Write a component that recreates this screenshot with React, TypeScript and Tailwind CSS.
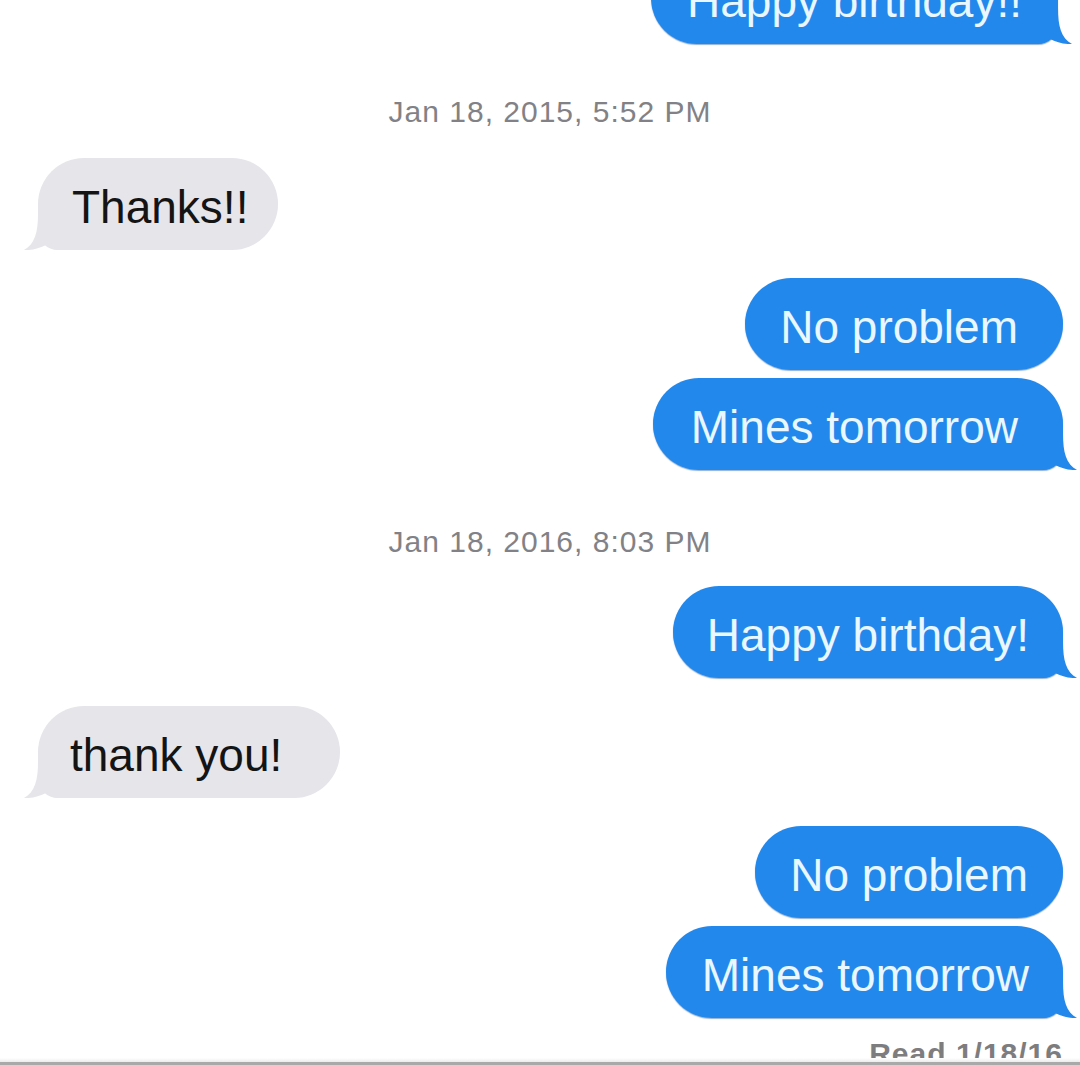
type Side = 'left' | 'right';

const BLUE = '#2388ec';
const GRAY = '#e5e5ea';

function Tail({ side }: { side: Side }) {
  return (
    <svg
      width="34"
      height="36"
      viewBox="0 0 34 36"
      className={
        side === 'right'
          ? 'absolute -right-[14px] bottom-0'
          : 'absolute -left-[14px] bottom-0 -scale-x-100'
      }
    >
      <path
        d="M0 0H20C20 18 23 30 34 36C26 36.5 18 34 12 31C9 33.5 5 35.5 0 36Z"
        fill={side === 'right' ? BLUE : GRAY}
      />
    </svg>
  );
}

interface BubbleProps {
  text: string;
  side: Side;
  tail?: boolean;
  className?: string;
  pad: string;
}

function Bubble({ text, side, tail, className = '', pad }: BubbleProps) {
  const color =
    side === 'right'
      ? 'bg-[#2388ec] text-[#e9f7ff] shadow-[0_1px_1px_rgba(15,80,160,0.45)]'
      : 'bg-[#e5e5ea] text-[#141414]';
  const corner = tail ? (side === 'right' ? 'rounded-br-[20px]' : 'rounded-bl-[20px]') : '';
  return (
    <div
      className={`flex ${side === 'right' ? 'justify-end pr-[17px]' : 'justify-start pl-[38px]'} ${className}`}
    >
      <div
        className={`relative h-[92px] rounded-[46px] ${corner} ${color} ${pad} pt-[23px] pb-[17px] text-[46px] leading-[52px] whitespace-nowrap`}
      >
        {text}
        {tail && <Tail side={side} />}
      </div>
    </div>
  );
}

function Stamp({ text, className }: { text: string; className: string }) {
  return (
    <div
      className={`text-center text-[30px] leading-[36px] tracking-[1px] text-[#828286] pl-[20px] ${className}`}
    >
      {text}
    </div>
  );
}

export default function App() {
  return (
    <div className="relative w-full h-[1065px] overflow-hidden bg-white font-['Liberation_Sans',Arial,sans-serif]">
      <div className="flex flex-col">
        <Bubble
          text="Happy birthday!!"
          side="right"
          tail
          pad="pl-[36px] pr-[36px]"
          className="-mt-[48px] pr-[22px]"
        />
        <Stamp text="Jan 18, 2015, 5:52 PM" className="mt-[50px]" />
        <Bubble text="Thanks!!" side="left" tail pad="pl-[34px] pr-[30px]" className="mt-[28px]" />
        <Bubble text="No problem" side="right" pad="pl-[35px] pr-[45px]" className="mt-[28px]" />
        <Bubble
          text="Mines tomorrow"
          side="right"
          tail
          pad="pl-[38px] pr-[45px]"
          className="mt-[8px]"
        />
        <Stamp text="Jan 18, 2016, 8:03 PM" className="mt-[54px]" />
        <Bubble
          text="Happy birthday!"
          side="right"
          tail
          pad="pl-[34px] pr-[34px]"
          className="mt-[26px]"
        />
        <Bubble
          text="thank you!"
          side="left"
          tail
          pad="pl-[32px] pr-[58px]"
          className="mt-[28px]"
        />
        <Bubble text="No problem" side="right" pad="pl-[35px] pr-[35px]" className="mt-[28px]" />
        <Bubble
          text="Mines tomorrow"
          side="right"
          tail
          pad="pl-[36px] pr-[34px]"
          className="mt-[8px]"
        />
        <div className="mt-[18px] pr-[17px] text-right text-[30px] leading-[36px] tracking-[1px] font-bold text-[#7d7d80]">
          Read 1/18/16
        </div>
      </div>
      <div className="absolute left-0 right-0 bottom-[3px] h-[4px] bg-gradient-to-b from-white to-[#ececec]" />
      <div className="absolute left-0 right-0 bottom-0 h-[3px] bg-[#a9a9a9]" />
    </div>
  );
}
